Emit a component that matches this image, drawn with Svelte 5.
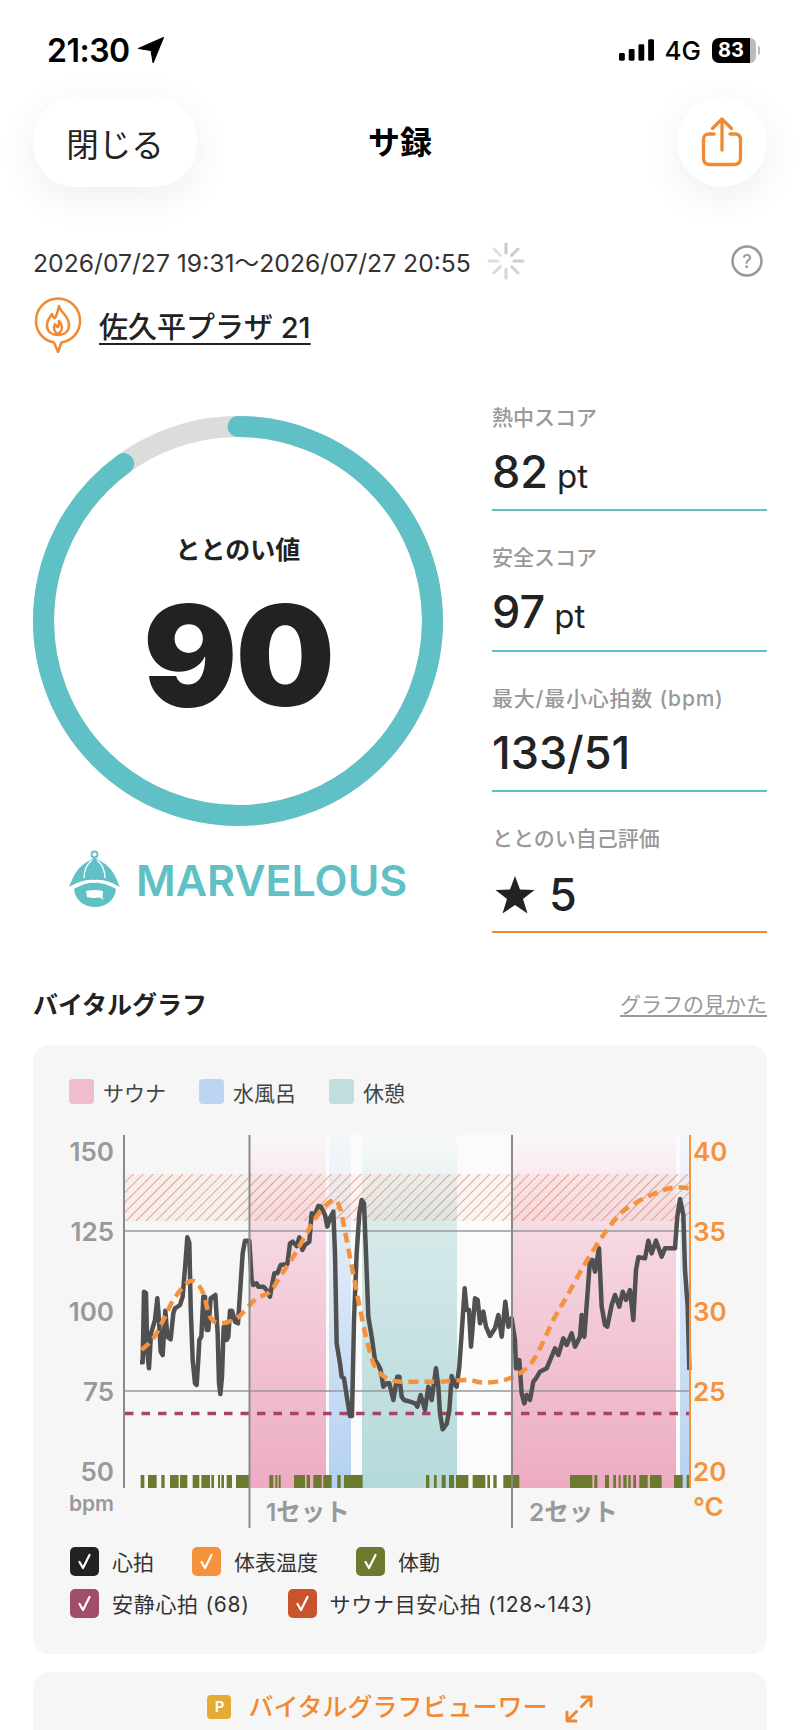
<script>
  // chart coordinates are the zoomed page coordinates: left half from x=40, right half from x=400
  const fromLeft = ([x, y]) => [40 + x / 3, 1120 + y / 3];
  const fromRight = ([x, y]) => [400 + x / 3, 1120 + y / 3];

  const hrLeft = [[300,727],[308,727],[312,515],[318,520],[322,700],[327,745],[333,640],[345,600],[352,535],[357,600],[362,695],[368,705],[376,572],[382,650],[392,658],[400,580],[405,565],[420,555],[428,530],[437,420],[442,352],[448,368],[452,560],[458,720],[465,790],[470,795],[476,700],[478,660],[484,650],[490,530],[495,530],[500,630],[505,630],[512,535],[526,525],[533,640],[537,790],[541,822],[546,770],[551,620],[556,620],[560,660],[565,650],[570,572],[576,572],[585,605],[594,610],[600,520],[608,400],[615,362],[628,362],[635,480],[640,495],[650,490],[655,500],[670,500],[680,510],[690,530],[695,500],[703,460],[712,460],[722,435],[742,432],[750,370],[758,365],[770,378],[778,352],[787,390],[795,375],[808,365],[815,280],[822,290],[835,258],[843,260],[855,285],[862,320],[870,295],[880,275],[885,400],[890,670],[900,730],[905,770],[912,775],[922,840],[930,888],[936,888],[942,600],[950,400],[958,280],[965,240],[972,250],[978,400],[985,590],[995,650],[1005,720],[1015,735],[1022,750],[1030,800],[1040,790],[1048,790],[1060,840],[1072,770],[1078,770]];
  const hrRight = [[5,830],[12,840],[30,845],[45,850],[52,860],[62,825],[75,870],[85,800],[95,840],[108,745],[115,800],[120,880],[128,928],[140,912],[148,870],[155,768],[162,790],[170,800],[178,740],[185,640],[194,505],[200,570],[207,570],[213,680],[225,535],[233,540],[240,610],[250,575],[258,620],[270,648],[285,625],[295,585],[305,650],[316,545],[325,620],[335,595],[345,660],[348,745],[358,720],[365,820],[373,850],[380,825],[390,840],[400,785],[408,775],[420,755],[440,745],[465,685],[475,705],[490,655],[500,675],[515,640],[525,680],[540,650],[545,585],[553,650],[570,420],[578,420],[585,455],[597,385],[605,560],[615,615],[622,620],[635,555],[645,525],[658,560],[668,515],[678,540],[690,510],[700,600],[708,450],[715,412],[735,415],[745,362],[755,400],[768,362],[785,410],[795,385],[825,385],[832,290],[840,237],[850,285],[855,450],[863,560],[868,750]];
  const tempLeft = [[305,690],[340,655],[370,600],[400,540],[440,490],[465,485],[490,520],[510,590],[540,610],[590,595],[620,565],[650,535],[690,515],[720,470],[760,410],[800,340],[840,275],[880,240],[900,265],[920,360],[945,490],[965,590],[985,680],[1005,740],[1040,775],[1080,785]];
  const tempRight = [[60,785],[120,785],[200,780],[250,788],[300,783],[340,770],[385,740],[420,685],[460,600],[500,530],[550,440],[600,360],[640,305],[680,265],[760,222],[820,203],[868,205]];

  const hrLine = [...hrLeft.map(fromLeft), ...hrRight.map(fromRight)].map((p) => p.join(',')).join(' ');

  function smooth(pts) {
    let d = `M${pts[0][0]} ${pts[0][1]}`;
    for (let i = 0; i < pts.length - 1; i++) {
      const p0 = pts[i - 1] || pts[i];
      const p1 = pts[i];
      const p2 = pts[i + 1];
      const p3 = pts[i + 2] || p2;
      d += ` C${p1[0] + (p2[0] - p0[0]) / 6} ${p1[1] + (p2[1] - p0[1]) / 6} ${p2[0] - (p3[0] - p1[0]) / 6} ${p2[1] - (p3[1] - p1[1]) / 6} ${p2[0]} ${p2[1]}`;
    }
    return d;
  }
  const tempLine = smooth([...tempLeft.map(fromLeft), ...tempRight.map(fromRight)]);

  const motion = [
    ...[[302,313],[324,350],[364,374],[390,416],[420,442],[458,478],[484,510],[514,522],[534,540],[544,552],[560,576],[588,628],[688,700],[706,712],[716,722],[762,795],[800,810],[820,845],[850,875],[892,902],[912,968]].map(([a, b]) => [40 + a / 3, (b - a) / 3]),
    ...[[78,88],[102,110],[125,137],[147,162],[168,205],[218,256],[262,270],[280,290],[310,358],[510,577],[583,592],[615,627],[640,648],[656,662],[670,680],[685,692],[700,708],[718,743],[750,785],[822,848],[860,868]].map(([a, b]) => [400 + a / 3, (b - a) / 3])
  ];

  const zones = [
    { x: 250, w: 76, fill: 'url(#sauna)' },
    { x: 329, w: 22, fill: 'url(#water)' },
    { x: 362, w: 95, fill: 'url(#rest)' },
    { x: 513, w: 163, fill: 'url(#sauna)' },
    { x: 680, w: 10, fill: 'url(#water)' }
  ];

  const hrTicks = [[150, 1161], [125, 1241], [100, 1321], [75, 1401], [50, 1481]];
  const tempTicks = [[40, 1161], [35, 1241], [30, 1321], [25, 1401], [20, 1481]];

  const stats = [
    { label: '熱中スコア', value: '82', unit: 'pt' },
    { label: '安全スコア', value: '97', unit: 'pt' },
    { label: '最大/最小心拍数 (bpm)', value: '133/51', unit: '' }
  ];

  const zoneKeys = [
    { label: 'サウナ', color: '#f0bccf' },
    { label: '水風呂', color: '#bcd6f2' },
    { label: '休憩', color: '#c0dedd' }
  ];

  const checkRows = [
    [
      { label: '心拍', color: '#222222' },
      { label: '体表温度', color: '#f5923e' },
      { label: '体動', color: '#6b7a2f' }
    ],
    [
      { label: '安静心拍 (68)', color: '#a34d6c' },
      { label: 'サウナ目安心拍 (128~143)', color: '#c9532d' }
    ]
  ];

  const spokes = [0, 45, 90, 135, 180, 225, 270, 315];
</script>

<div class="page">
  <div class="status">
    <div class="status-left">
      <span class="time">21:30</span>
      <svg width="26" height="26" viewBox="0 0 25 25"><path d="M24.500 0.500 L0.500 11 L12.500 13 L14.500 25 Z" fill="#000" stroke="#000" stroke-linejoin="round" /></svg>
    </div>
    <div class="status-right">
      <svg width="35" height="24" viewBox="0 0 36 24">
        <rect x="0" y="15" width="6" height="8" rx="1.5" />
        <rect x="10" y="11" width="6" height="12" rx="1.5" />
        <rect x="20" y="6" width="6" height="17" rx="1.5" />
        <rect x="30" y="1" width="6" height="22" rx="1.5" />
      </svg>
      <span class="net">4G</span>
      <div class="battery"><span class="level">83</span><span class="rest"></span><span class="nub"></span></div>
    </div>
  </div>

  <div class="nav">
    <button class="close">閉じる</button>
    <div class="title">サ録</div>
    <button class="share" aria-label="share">
      <svg width="42" height="50" viewBox="0 0 42 50" fill="none" stroke="#f08a32" stroke-width="3.300" stroke-linecap="round" stroke-linejoin="round">
        <path d="M13 17 H8 Q2.500 17 2.500 23 V41 Q2.500 47.500 9 47.500 H33 Q39.500 47.500 39.500 41 V23 Q39.500 17 34 17 H29" />
        <path d="M21 33 V2 M11.500 11.500 L21 2 L30.500 11.500" />
      </svg>
    </button>
  </div>

  <div class="date-row">
    <span class="date">2026/07/27 19:31～2026/07/27 20:55</span>
    <svg class="spinner" width="38" height="38" viewBox="-19 -19 38 38">
      {#each spokes as a, i}
        <line x1="0" y1="-17" x2="0" y2="-8" transform="rotate({a})" stroke="#c8c8c8" stroke-width="3" stroke-linecap="round" opacity={1 - i * 0.07} />
      {/each}
    </svg>
    <svg class="help" width="32" height="32" viewBox="0 0 32 32">
      <circle cx="16" cy="16" r="14.5" fill="none" stroke="#999" stroke-width="2.500" />
      <text x="16" y="22.500" text-anchor="middle" font-size="18" font-weight="500" fill="#999">?</text>
    </svg>
  </div>

  <div class="venue">
    <svg width="48" height="56" viewBox="0 0 48 56" fill="none" stroke="#f08a32" stroke-width="2.500" stroke-linejoin="round" stroke-linecap="round">
      <path d="M24 1.500 C12 1.500 2 11 2 24 C2 35 9.500 43.500 20 45.500 L24 55 L27.500 45.500 C38.500 43.500 46 35 46 24 C46 11 36 1.500 24 1.500 Z" />
      <path d="M25 9 C26 15 35 19 35 28 C35 35 30 38 24 38 C18 38 13 35 13 28 C13 23 16 20 18 17 C19 20 20 21 21 21 C23 18 24 13 25 9 Z M24 37 C20 35 19 31 21 27 C22 29 23 30 24 30 C25 28 25 26 25 24 C28 27 30 33 24 37 Z" />
    </svg>
    <a class="venue-name" href="#venue">佐久平プラザ 21</a>
  </div>

  <div class="summary">
    <div class="score-col">
      <div class="ring">
        <svg width="410" height="410" viewBox="0 0 410 410">
          <circle cx="205" cy="205" r="194.500" fill="none" stroke="#dcdcdc" stroke-width="21" />
          <circle cx="205" cy="205" r="194.500" fill="none" stroke="#5fc0c6" stroke-width="21" stroke-linecap="round" pathLength="100" stroke-dasharray="90 100" transform="rotate(-90 205 205)" />
        </svg>
        <div class="ring-inner">
          <div class="ring-label">ととのい値</div>
          <div class="ring-value">90</div>
        </div>
      </div>
      <div class="grade">
        <svg width="54" height="60" viewBox="27 21 54 60">
          <circle cx="53.500" cy="25.500" r="3" fill="none" stroke="#5fc0c6" stroke-width="1.800" />
          <path d="M28 58 C32 50 34 37 53.500 29 C73 37 75 50 79 58 C70 53 62 50 53.500 51 C45 50 37 53 28 58 Z" fill="#5fc0c6" />
          <path d="M43 49 C43 41 46 35 51 31 M64 49 C64 41 61 35 56 31" fill="none" stroke="#fff" stroke-width="1.500" />
          <path d="M33 60 C42 55 49 53 53.500 54 C58 53 66 55 75 60 C74 71 65 78 54 78 C43 78 34 71 33 60 Z" fill="#5fc0c6" />
          <path d="M45 62 Q54 60 62 62 L61.500 68 L62.500 71 L59 68.500 Q52 69.500 46 68 Z" fill="#fff" />
        </svg>
        <span>MARVELOUS</span>
      </div>
    </div>
    <div class="stats">
      {#each stats as s}
        <div class="stat">
          <div class="stat-label">{s.label}</div>
          <div class="stat-value">{s.value}{#if s.unit}<small>{s.unit}</small>{/if}</div>
        </div>
      {/each}
      <div class="stat self">
        <div class="stat-label">ととのい自己評価</div>
        <div class="stat-value">
          <svg width="40" height="38" viewBox="0 0 40 38"><path d="M20 0 L25 13.500 L39.500 14 L28 23 L32.500 37.500 L20 29 L7.500 37.500 L12 23 L0.500 14 L15 13.500 Z" fill="#222" /></svg>
          <span>5</span>
        </div>
      </div>
    </div>
  </div>

  <div class="section-head">
    <h2>バイタルグラフ</h2>
    <a href="#guide">グラフの見かた</a>
  </div>

  <div class="card graph-card">
    <div class="zone-keys">
      {#each zoneKeys as k}
        <div class="zone-key"><span class="swatch" style="background:{k.color}"></span>{k.label}</div>
      {/each}
    </div>

    <svg class="chart" width="734" height="410" viewBox="33 1120 734 410">
      <defs>
        <linearGradient id="sauna" x1="0" y1="0" x2="0" y2="1">
          <stop offset="0" stop-color="#edabc2" stop-opacity="0.05" />
          <stop offset="0.3" stop-color="#edabc2" stop-opacity="0.45" />
          <stop offset="1" stop-color="#edabc2" />
        </linearGradient>
        <linearGradient id="water" x1="0" y1="0" x2="0" y2="1">
          <stop offset="0" stop-color="#b4d1f1" stop-opacity="0.1" />
          <stop offset="1" stop-color="#b4d1f1" />
        </linearGradient>
        <linearGradient id="rest" x1="0" y1="0" x2="0" y2="1">
          <stop offset="0" stop-color="#b5d9da" stop-opacity="0.05" />
          <stop offset="0.3" stop-color="#b5d9da" stop-opacity="0.55" />
          <stop offset="1" stop-color="#b5d9da" />
        </linearGradient>
        <pattern id="hatch" width="7" height="7" patternUnits="userSpaceOnUse" patternTransform="rotate(45)">
          <line x1="0" y1="0" x2="0" y2="7" stroke="#d9633a" stroke-width="1.500" stroke-opacity="0.7" />
        </pattern>
      </defs>

      <rect x="250" y="1135" width="440" height="353" fill="#fff" opacity="0.5" />
      {#each zones as z}
        <rect x={z.x} y="1135" width={z.w} height="353" fill={z.fill} />
      {/each}
      <rect x="125" y="1174" width="565" height="47" fill="#eea68c" opacity="0.08" />
      <rect x="125" y="1174" width="565" height="47" fill="url(#hatch)" />

      <line x1="125" y1="1231" x2="690" y2="1231" class="grid" />
      <line x1="125" y1="1391" x2="690" y2="1391" class="grid" />
      <line x1="125" y1="1413.500" x2="690" y2="1413.500" class="rest-line" />

      {#each motion as [x, w]}
        <rect {x} y="1475" width={w} height="13" fill="#6b7a2f" />
      {/each}

      <polyline points={hrLine} class="hr" />
      <path d={tempLine} class="temp" />

      <line x1="124" y1="1135" x2="124" y2="1488" class="axis" />
      <line x1="249.500" y1="1135" x2="249.500" y2="1528" class="axis" />
      <line x1="512" y1="1135" x2="512" y2="1528" class="axis" />
      <line x1="690" y1="1135" x2="690" y2="1488" class="axis-temp" />

      {#each hrTicks as [v, y]}
        <text x="114" {y} text-anchor="end" class="tick">{v}</text>
      {/each}
      {#each tempTicks as [v, y]}
        <text x="693" {y} class="tick orange">{v}</text>
      {/each}
      <text x="114" y="1511" text-anchor="end" class="unit">bpm</text>
      <text x="693" y="1516" class="tick orange">°C</text>
      <text x="266" y="1521" class="set">1セット</text>
      <text x="529" y="1521" class="set">2セット</text>
    </svg>

    <div class="checks">
      {#each checkRows as row}
        <div class="check-row">
          {#each row as c}
            <div class="check">
              <span class="box" style="background:{c.color}">
                <svg width="29" height="29" viewBox="0 0 29 29" fill="none" stroke="#fff" stroke-width="2.200" stroke-linecap="round" stroke-linejoin="round"><path d="M9.500 15 L13 21 L19.500 8" /></svg>
              </span>
              {c.label}
            </div>
          {/each}
        </div>
      {/each}
    </div>
  </div>

  <div class="card viewer-card">
    <span class="badge">P</span>
    <span class="viewer-text">バイタルグラフビューワー</span>
    <svg width="28" height="28" viewBox="0 0 28 28" fill="none" stroke="#f08a32" stroke-width="3" stroke-linecap="round" stroke-linejoin="round">
      <path d="M17 2 H26 V11 M26 2 L16.500 11.500 M2 17 V26 H11 M2 26 L11.500 16.500" />
    </svg>
  </div>
</div>

<style>
  :global(body) {
    margin: 0;
    background: #fff;
    font-family: Inter, "Noto Sans CJK JP", sans-serif;
    color: #222;
  }
  .page {
    height: 1730px;
    overflow: hidden;
    box-sizing: border-box;
    padding: 33px 33px 0;
  }
  .status {
    height: 36px;
    display: flex;
    justify-content: space-between;
    align-items: center;
    color: #000;
    position: relative;
    top: -1px;
  }
  .status-left {
    display: flex;
    align-items: center;
    gap: 8px;
    padding-left: 14px;
  }
  .time {
    font-size: 32px;
    font-weight: 600;
    letter-spacing: -0.5px;
  }
  .status-right {
    display: flex;
    align-items: center;
    gap: 11px;
    padding-right: 11px;
  }
  .net {
    font-size: 26px;
    font-weight: 500;
  }
  .battery {
    position: relative;
    display: flex;
    width: 44px;
    height: 25px;
    border-radius: 7px;
    overflow: visible;
  }
  .level {
    width: 38px;
    background: #000;
    color: #fff;
    font-size: 20px;
    font-weight: 700;
    line-height: 25px;
    text-align: center;
    border-radius: 7px 0 0 7px;
  }
  .battery .rest {
    width: 6px;
    background: #bbb;
    border-radius: 0 7px 7px 0;
  }
  .nub {
    position: absolute;
    right: -4px;
    top: 8px;
    width: 2px;
    height: 9px;
    background: #bbb;
    border-radius: 0 2px 2px 0;
  }
  .nav {
    display: flex;
    justify-content: space-between;
    align-items: center;
    margin-top: 28px;
    position: relative;
  }
  .nav button {
    height: 90px;
    border: 0;
    background: #fff;
    box-shadow: 0 10px 40px rgba(0, 0, 0, 0.07);
    font: inherit;
    color: #222;
    padding: 0;
  }
  .close {
    width: 164px;
    border-radius: 42px;
    font-size: 32.5px !important;
  }
  .title {
    position: absolute;
    left: 0;
    right: 0;
    text-align: center;
    font-size: 32px;
    font-weight: 700;
    color: #000;
    top: 20px;
  }
  .share {
    width: 90px;
    border-radius: 50%;
    display: flex;
    align-items: center;
    justify-content: center;
  }
  .date-row {
    display: flex;
    align-items: center;
    margin-top: 54px;
    height: 40px;
  }
  .date {
    font-size: 24.7px;
    color: #333;
    white-space: nowrap;
  }
  .spinner {
    margin-left: 16px;
  }
  .help {
    margin-left: auto;
    margin-right: 4px;
  }
  .venue {
    display: flex;
    align-items: center;
    gap: 17px;
    margin-top: 16px;
    padding-left: 1px;
  }
  .venue-name {
    color: #222;
    font-size: 29px;
    font-weight: 500;
    text-underline-offset: 5px;
    text-decoration-thickness: 2px;
    margin-top: -1px;
  }
  .summary {
    display: flex;
    justify-content: space-between;
    margin-top: 50px;
    height: 570px;
  }
  .score-col {
    width: 410px;
    margin-top: 13px;
  }
  .ring {
    position: relative;
    width: 410px;
    height: 410px;
  }
  .ring-inner {
    position: absolute;
    inset: 0;
    display: flex;
    flex-direction: column;
    align-items: center;
    padding-top: 116px;
  }
  .ring-label {
    font-size: 25px;
    font-weight: 700;
    line-height: 36px;
  }
  .ring-value {
    font-size: 140px;
    font-weight: 900;
    line-height: 150px;
    margin-top: 12px;
    letter-spacing: -2px;
  }
  .grade {
    display: flex;
    align-items: center;
    gap: 14px;
    margin-top: 24px;
    padding-left: 35px;
    color: #5fc0c6;
    font-size: 43px;
    font-weight: 600;
    line-height: 60px;
  }
  .stats {
    width: 275px;
    display: flex;
    flex-direction: column;
  }
  .stat {
    height: 140.5px;
    box-sizing: border-box;
    border-bottom: 2px solid #5fc0c6;
  }
  .stat:first-child {
    height: 108px;
  }
  .stat:nth-child(3) .stat-label {
    letter-spacing: 0.8px;
  }
  .stat.self {
    border-bottom-color: #f08a32;
  }
  .stat-label {
    color: #999;
    font-size: 21px;
    font-weight: 500;
    line-height: 30px;
    padding-top: 32px;
  }
  .stat:first-child .stat-label {
    padding-top: 0;
  }
  .stat-value {
    display: flex;
    align-items: baseline;
    gap: 9px;
    font-size: 45px;
    font-weight: 500;
    line-height: 54px;
    margin-top: 12px;
  }
  .stat-value small {
    font-size: 33px;
    font-weight: 400;
  }
  .self .stat-value {
    align-items: center;
    gap: 14px;
    margin-top: 14px;
    padding-left: 3px;
  }
  .section-head {
    display: flex;
    justify-content: space-between;
    align-items: center;
    margin-top: 11.5px;
    height: 36px;
  }
  h2 {
    margin: 0;
    font-size: 25px;
    font-weight: 700;
  }
  .section-head a {
    color: #999;
    font-size: 21px;
    text-underline-offset: 3px;
  }
  .card {
    background: #f6f6f6;
    border-radius: 16px;
  }
  .graph-card {
    margin-top: 24px;
    height: 609px;
    box-sizing: border-box;
    padding-top: 32px;
  }
  .zone-keys {
    display: flex;
    gap: 33px;
    padding-left: 36px;
    height: 33px;
    align-items: flex-start;
  }
  .zone-key {
    display: flex;
    align-items: center;
    gap: 9px;
    font-size: 21px;
    color: #444;
  }
  .swatch {
    width: 25px;
    height: 25px;
    border-radius: 4px;
  }
  .chart {
    display: block;
    margin-top: 10px;
    font-family: Inter, "Noto Sans CJK JP", sans-serif;
  }
  .grid {
    stroke: #999;
    stroke-width: 1.5;
  }
  .axis {
    stroke: #8a8a8a;
    stroke-width: 2;
  }
  .axis-temp {
    stroke: #f5923e;
    stroke-width: 2;
  }
  .rest-line {
    stroke: #a8446a;
    stroke-width: 3.5;
    stroke-dasharray: 8.5 8;
  }
  .hr {
    fill: none;
    stroke: #505050;
    stroke-width: 4.5;
    stroke-linejoin: round;
  }
  .temp {
    fill: none;
    stroke: #f5923e;
    stroke-width: 4.5;
    stroke-dasharray: 10 6;
  }
  .tick {
    font-size: 26px;
    font-weight: 600;
    fill: #999;
  }
  .tick.orange {
    fill: #f5923e;
  }
  .unit {
    font-size: 21px;
    font-weight: 600;
    fill: #999;
  }
  .set {
    font-size: 24.5px;
    font-weight: 600;
    fill: #999;
  }
  .checks {
    display: flex;
    flex-direction: column;
    gap: 13px;
    margin-top: 17px;
    padding-left: 37px;
  }
  .check-row {
    display: flex;
    gap: 38px;
  }
  .check-row:nth-child(2) {
    letter-spacing: 0.7px;
  }
  .check {
    display: flex;
    align-items: center;
    gap: 13px;
    font-size: 21px;
    color: #333;
    height: 29px;
  }
  .box {
    width: 29px;
    height: 29px;
    border-radius: 5px;
    display: block;
  }
  .box svg {
    display: block;
  }
  .viewer-card {
    margin-top: 18px;
    height: 110px;
    display: flex;
    align-items: flex-start;
    justify-content: center;
    gap: 17px;
    padding-top: 23px;
    box-sizing: border-box;
  }
  .badge {
    width: 24px;
    height: 24px;
    background: #e5ac35;
    color: #fff;
    border-radius: 4px;
    font-size: 15px;
    font-weight: 600;
    line-height: 24px;
    text-align: center;
  }
  .viewer-text {
    color: #f08a32;
    font-size: 25px;
    font-weight: 500;
    line-height: 24px;
  }
</style>
